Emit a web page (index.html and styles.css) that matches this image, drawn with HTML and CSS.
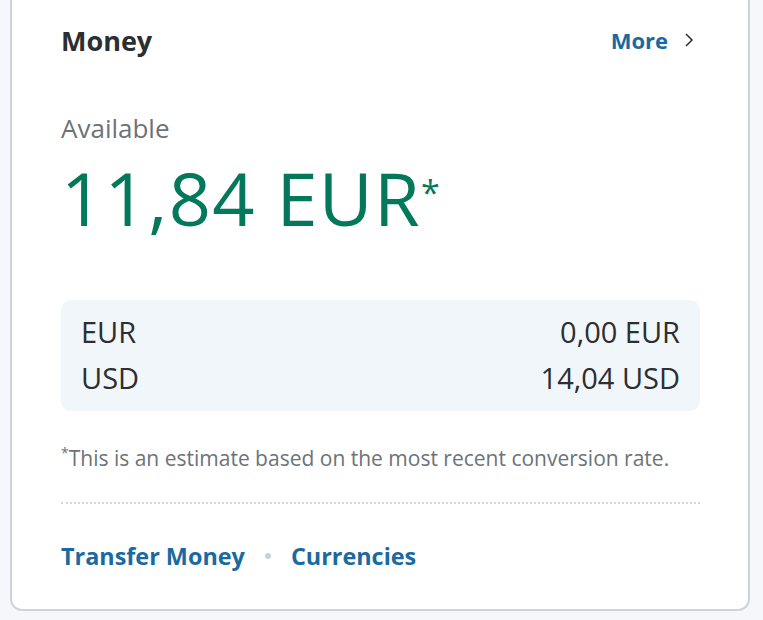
FILE: index.html
```html
<!DOCTYPE html>
<html>
<head>
<meta charset="utf-8">
<link rel="stylesheet" href="styles.css">
</head>
<body>
<div class="card">
  <div class="header">
    <h2 class="title">Money</h2>
    <a class="more">More
      <svg class="chev" width="10" height="16" viewBox="0 0 10 16"><path d="M2 2 L8 8 L2 14" fill="none" stroke="#2c2e2f" stroke-width="1.5"/></svg>
    </a>
  </div>
  <div class="avail-label">Available</div>
  <div class="amount">11,84 EUR<span class="star">*</span></div>
  <div class="balances">
    <div class="row"><span>EUR</span><span>0,00 EUR</span></div>
    <div class="row"><span>USD</span><span>14,04 USD</span></div>
  </div>
  <p class="note"><sup>*</sup>This is an estimate based on the most recent conversion rate.</p>
  <div class="links">
    <a class="link">Transfer Money</a>
    <span class="dot"></span>
    <a class="link">Currencies</a>
  </div>
</div>
</body>
</html>
```
FILE: styles.css
```css
html, body {
  margin: 0;
  padding: 0;
  background: #f5f7fa;
}
body {
  font-family: "Open Sans", sans-serif;
  color: #2c2e2f;
  width: 763px;
  height: 620px;
  overflow: hidden;
}
.card {
  margin-left: 10px;
  width: 740px;
  height: 611px;
  background: #fff;
  border: 2px solid #cfd3d8;
  border-top: none;
  border-radius: 0 0 12px 12px;
  box-sizing: border-box;
  padding: 20px 48px 0 49px;
}
.header {
  display: flex;
  justify-content: space-between;
  align-items: center;
  height: 40px;
}
.title {
  margin: 0;
  font-size: 27px;
  font-weight: bold;
}
.more {
  display: flex;
  align-items: center;
  gap: 16px;
  color: #1a6aa1;
  font-weight: bold;
  font-size: 22px;
}
.chev {
  margin-right: 6px;
}
.avail-label {
  margin-top: 52px;
  font-size: 26px;
  color: #6c7378;
  line-height: 32px;
}
.amount {
  margin-top: 9px;
  font-size: 74px;
  letter-spacing: 1.3px;
  color: #03785b;
  line-height: 90px;
}
.star {
  font-size: 34px;
  vertical-align: 21px;
  line-height: 10px;
  letter-spacing: 0;
}
.balances {
  margin-top: 57px;
  background: #f1f6fb;
  border-radius: 10px;
  padding: 9px 20px 10px;
  font-size: 29px;
}
.row {
  display: flex;
  justify-content: space-between;
  line-height: 46px;
}
.note {
  margin: 32px 0 0;
  font-size: 21px;
  color: #6c7378;
}
.note sup {
  font-size: 14px;
}
.links {
  margin-top: 30px;
  border-top: 2px dotted #d3d6da;
  padding-top: 36px;
  display: flex;
  align-items: center;
  gap: 20px;
}
.link {
  color: #1a6aa1;
  font-weight: bold;
  font-size: 23.4px;
}
.dot {
  width: 6px;
  height: 6px;
  border-radius: 50%;
  background: #cbd2d6;
}
```
